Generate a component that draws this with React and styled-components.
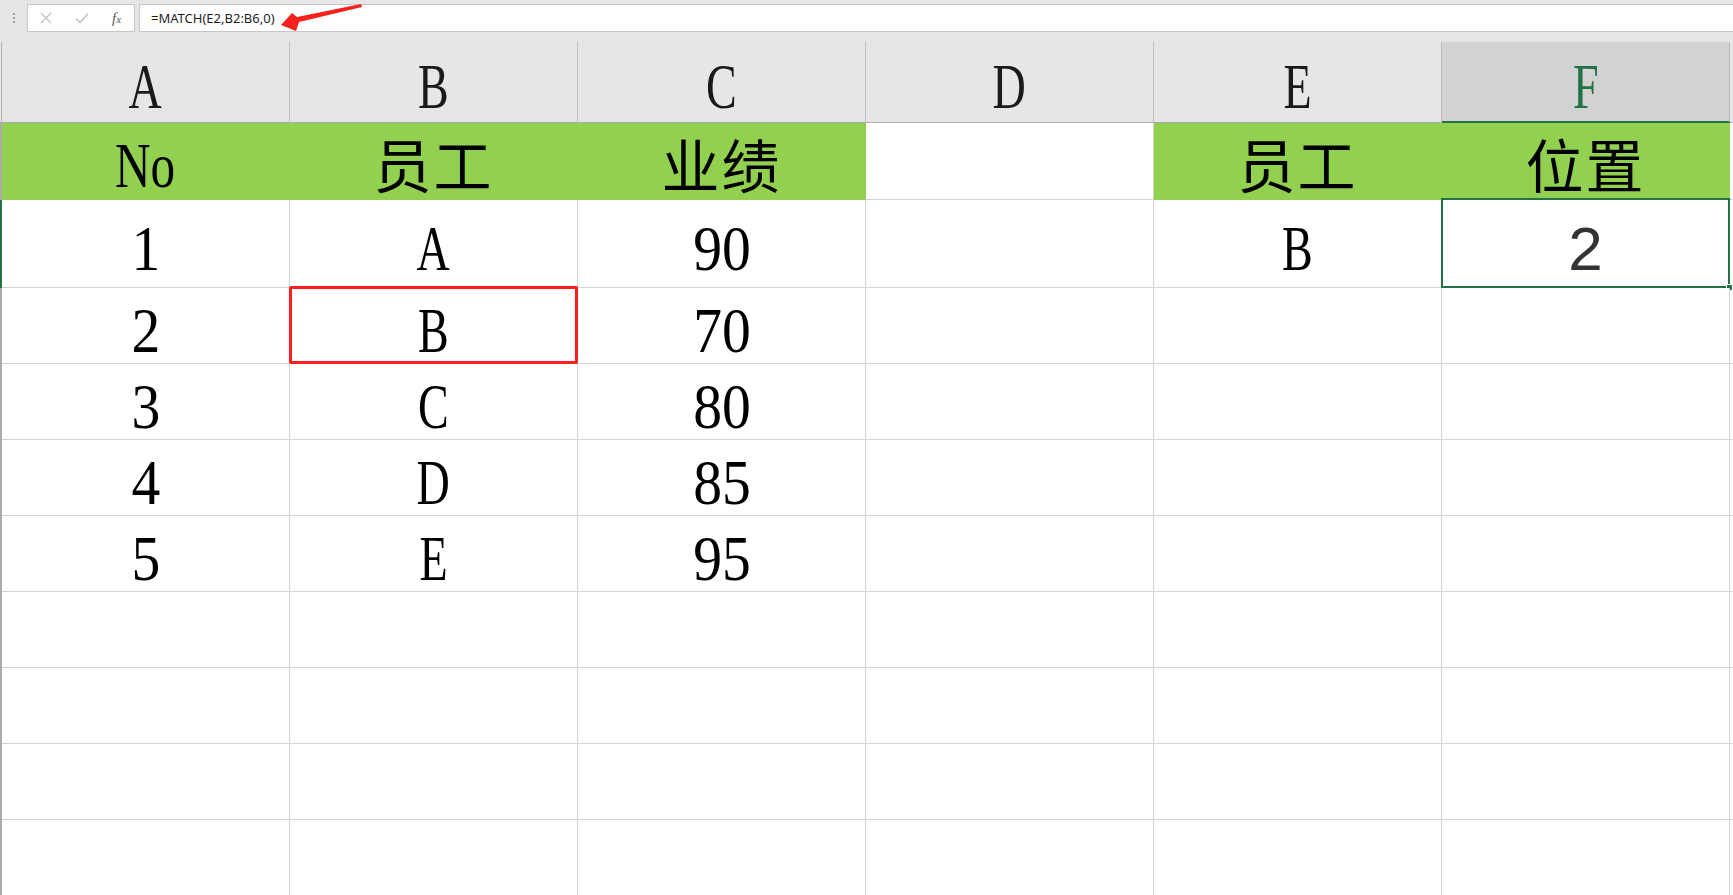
import { Fragment } from 'react';
import styled, { createGlobalStyle } from 'styled-components';

const GlobalStyle = createGlobalStyle`
  html, body {
    margin: 0;
    padding: 0;
    background: #ffffff;
    overflow: hidden;
  }
  body {
    font-family: "Liberation Sans", Arial, sans-serif;
  }
`;

const Page = styled.div`
  width: 1733px;
  height: 895px;
  overflow: hidden;
  background: #ffffff;
`;

const Toolbar = styled.div`
  position: relative;
  height: 42px;
  box-sizing: border-box;
  padding-top: 4px;
  background: #e6e6e6;
  display: flex;
  align-items: flex-start;
`;

const Grip = styled.div`
  width: 27px;
  height: 28px;
  display: flex;
  flex-direction: column;
  align-items: center;
  justify-content: center;
  gap: 2px;
  span {
    width: 2px;
    height: 2px;
    background: #a0a0a0;
  }
`;

const ControlBox = styled.div`
  width: 108px;
  height: 28px;
  box-sizing: border-box;
  border: 1px solid #c6c6c6;
  background: #ffffff;
  display: flex;
  align-items: center;
  padding-left: 12px;
  gap: 23px;
`;

const Fx = styled.span`
  font-family: "Liberation Serif", serif;
  font-style: italic;
  font-size: 15px;
  color: #595959;
  sub {
    font-size: 11px;
    vertical-align: baseline;
  }
`;

const FormulaBox = styled.div`
  flex: 1;
  height: 28px;
  margin-left: 4px;
  box-sizing: border-box;
  border: 1px solid #c6c6c6;
  border-right: none;
  background: #ffffff;
  display: flex;
  align-items: center;
  padding-left: 11px;
  font-family: "Noto Sans", "Liberation Sans", sans-serif;
  font-size: 13px;
  color: #1f1f1f;
`;

const Arrow = styled.svg`
  position: absolute;
  left: 0;
  top: 0;
  pointer-events: none;
`;

const Sheet = styled.div`
  display: grid;
  grid-template-columns: 2px repeat(6, 288px) 1fr;
  grid-template-rows: 81px 77px 88px repeat(8, 76px);
`;

const Corner = styled.div`
  background: #e6e6e6;
  border-right: 1px solid #b4b4b4;
  border-bottom: 1px solid #ababab;
  box-sizing: border-box;
`;

const ColHead = styled.div`
  box-sizing: border-box;
  background: ${(p) => (p.$active ? '#d2d2d2' : '#e6e6e6')};
  border-right: 1px solid #bdbdbd;
  border-bottom: ${(p) => (p.$active ? '2px solid #217346' : '1px solid #ababab')};
  color: ${(p) => (p.$active ? '#217346' : '#1a1a1a')};
  display: flex;
  align-items: center;
  justify-content: center;
  padding-top: 10px;
`;

const FillerHead = styled.div`
  background: #e6e6e6;
  border-bottom: 1px solid #ababab;
`;

const RowHead = styled.div`
  background: ${(p) => (p.$active ? '#217346' : '#ababab')};
`;

const Cell = styled.div`
  position: relative;
  box-sizing: border-box;
  background: ${(p) => p.$fill || '#ffffff'};
  border-right: 1px solid ${(p) => p.$fill || '#d4d4d4'};
  border-bottom: 1px solid ${(p) => p.$fill || '#d4d4d4'};
  display: flex;
  align-items: center;
  justify-content: center;
  padding-top: ${(p) => (p.$han ? '4px' : '10px')};
  color: #000000;
`;

const Filler = styled.div`
  border-bottom: 1px solid #d4d4d4;
`;

const Latin = styled.span`
  display: inline-block;
  font-family: "Liberation Serif", "Times New Roman", serif;
  font-size: 64px;
  line-height: 1;
  transform: scaleX(${(p) => p.$sx || 0.72});
`;

const Han = styled.span`
  font-family: "Noto Sans CJK SC", sans-serif;
  font-size: 58px;
  line-height: 1;
  letter-spacing: 2px;
`;

const Value = styled.span`
  font-family: "Liberation Sans", Arial, sans-serif;
  font-size: 62px;
  line-height: 1;
  color: #333333;
`;

const Outline = styled.div`
  position: absolute;
  top: -2px;
  left: -1px;
  right: -1px;
  bottom: -1px;
  border: ${(p) => p.$width || 2}px solid ${(p) => p.$color};
  border-radius: ${(p) => (p.$round ? '2px' : '0')};
  pointer-events: none;
`;

const Handle = styled.div`
  position: absolute;
  right: -4px;
  bottom: -4px;
  width: 5px;
  height: 5px;
  background: #217346;
  border: 1px solid #ffffff;
`;

const GREEN = '#92d050';
const cols = ['A', 'B', 'C', 'D', 'E', 'F'];

const rows = [
  ['1', 'A', '90'],
  ['2', 'B', '70'],
  ['3', 'C', '80'],
  ['4', 'D', '85'],
  ['5', 'E', '95'],
];

const Digits = ({ children }) => <Latin $sx={0.9}>{children}</Latin>;
const Letter = ({ children }) => <Latin $sx={0.72}>{children}</Latin>;

export default function App() {
  return (
    <Page>
      <GlobalStyle />
      <Toolbar>
        <Grip>
          <span />
          <span />
          <span />
        </Grip>
        <ControlBox>
          <svg width="12" height="12" viewBox="0 0 12 12">
            <path d="M1 1L11 11M11 1L1 11" stroke="#c3c3c3" strokeWidth="1.4" fill="none" />
          </svg>
          <svg width="14" height="12" viewBox="0 0 14 12">
            <path d="M1 6.5L5 10.5L13 1.5" stroke="#c3c3c3" strokeWidth="1.6" fill="none" />
          </svg>
          <Fx>
            f<sub>x</sub>
          </Fx>
        </ControlBox>
        <FormulaBox>=MATCH(E2,B2:B6,0)</FormulaBox>
        <Arrow width="400" height="42" viewBox="0 0 400 42">
          <polygon points="281,25 292,13 297,17 361,4 362,7 299,22 296,31" fill="#f5221b" />
        </Arrow>
      </Toolbar>
      <Sheet>
        <Corner />
        {cols.map((c) => (
          <ColHead key={c} $active={c === 'F'}>
            <Letter>{c}</Letter>
          </ColHead>
        ))}
        <FillerHead />

        <RowHead />
        <Cell $fill={GREEN}>
          <Latin $sx={0.77}>No</Latin>
        </Cell>
        <Cell $fill={GREEN} $han>
          <Han>员工</Han>
        </Cell>
        <Cell $fill={GREEN} $han>
          <Han>业绩</Han>
        </Cell>
        <Cell />
        <Cell $fill={GREEN} $han>
          <Han>员工</Han>
        </Cell>
        <Cell $fill={GREEN} $han>
          <Han>位置</Han>
        </Cell>
        <Filler />

        {rows.map(([no, name, score], i) => (
          <Fragment key={`r${i}`}>
            <RowHead $active={i === 0} />
            <Cell>
              <Digits>{no}</Digits>
            </Cell>
            <Cell>
              <Letter>{name}</Letter>
              {i === 1 && <Outline $color="#ff1e1e" $width={3} $round />}
            </Cell>
            <Cell>
              <Digits>{score}</Digits>
            </Cell>
            <Cell />
            <Cell>{i === 0 && <Letter>B</Letter>}</Cell>
            <Cell>
              {i === 0 && (
                <>
                  <Value>2</Value>
                  <Outline $color="#217346" />
                  <Handle />
                </>
              )}
            </Cell>
            <Filler />
          </Fragment>
        ))}

        {[0, 1, 2, 3].map((r) => (
          <Fragment key={`e${r}`}>
            <RowHead />
            {cols.map((c) => (
              <Cell key={c} />
            ))}
            <Filler />
          </Fragment>
        ))}
      </Sheet>
    </Page>
  );
}
